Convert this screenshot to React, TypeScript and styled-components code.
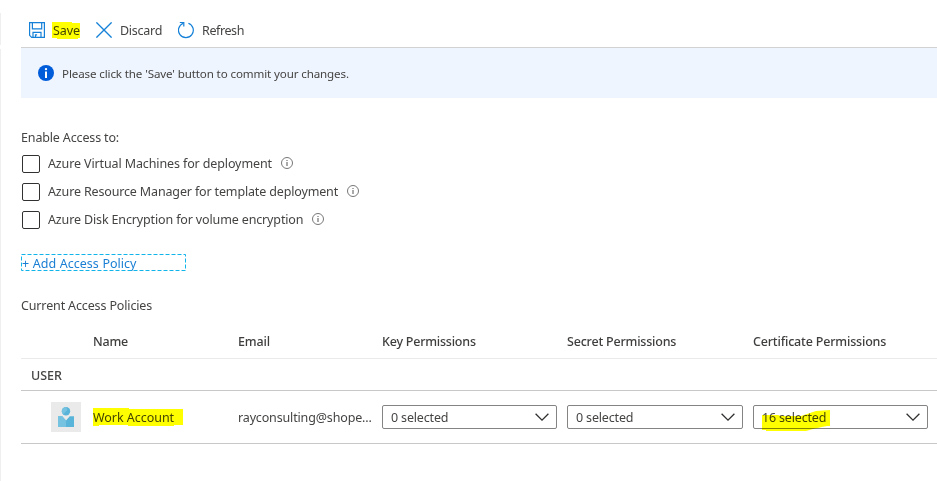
import React from 'react';
import styled, { createGlobalStyle } from 'styled-components';

const GlobalStyle = createGlobalStyle`
  * { box-sizing: border-box; }
  body {
    margin: 0;
    background: #fff;
    color: #454443;
    font: 12.5px/18px "Noto Sans", "Open Sans", sans-serif;
  }
`;

const Page = styled.main`
  width: 937px;
  height: 481px;
  padding-left: 21px;
  background: linear-gradient(#fff 13px, #efefef 13px 45px, #fff 45px 49px, #efefef 49px) 0 0 / 1px 100% no-repeat;
  overflow: hidden;
`;

const Label = styled.span<{ $track?: number }>`
  display: block;
  padding-top: 2px;
  letter-spacing: ${(p) => p.$track ?? -0.15}px;
  white-space: nowrap;
`;

const Toolbar = styled.div`
  display: flex;
  align-items: center;
  height: 48px;
  padding: 12px 0 0 8px;
  border-bottom: 1px solid #d2d2d2;
`;

const Command = styled.div<{ $width: number }>`
  display: flex;
  align-items: center;
  gap: 8px;
  width: ${(p) => p.$width}px;
  svg { flex: none; display: block; }
`;

const Marked = styled.span`
  position: relative;
  display: block;
  width: max-content;
`;

const Marker = styled.svg<{ $x: number; $y: number }>`
  position: absolute;
  left: ${(p) => p.$x}px;
  top: ${(p) => p.$y}px;
  mix-blend-mode: multiply;
  pointer-events: none;
`;

const Banner = styled.div`
  display: flex;
  align-items: center;
  gap: 8px;
  height: 50px;
  padding-left: 17px;
  background: #eff5ff;
  font-size: 11.6px;
  ${Label} { padding-top: 1px; }
`;

const Section = styled.section`
  padding-top: 30px;
`;

const Heading = styled.div`
  display: flex;
  align-items: center;
  height: 18px;
`;

const Options = styled.div`
  display: grid;
  gap: 10px;
  padding: 9px 0 0 1px;
`;

const Option = styled.label`
  display: flex;
  align-items: center;
  height: 18px;
`;

const OptionText = styled.span`
  display: flex;
  align-items: center;
  gap: 9px;
  height: 18px;
  margin: -2px 0 0 8px;
  svg { display: block; }
`;

const Checkbox = styled.span`
  width: 18px;
  height: 18px;
  border: 1px solid #323130;
  border-radius: 2px;
`;

const AddLink = styled.a`
  display: flex;
  align-items: center;
  width: 165px;
  height: 17px;
  margin: 25px 0;
  color: #1a7fd4;
  word-spacing: 0.4px;
  ${Label} { padding-left: 1px; }
  svg { position: absolute; }
`;

const Columns = styled.div`
  display: grid;
  grid-template-columns: 72px 145px 144px 185px 186px 184px;
  align-items: center;
`;

const HeaderRow = styled(Columns)`
  height: 45px;
  padding-top: 10px;
  border-bottom: 1px solid #eaeaea;
  font-weight: 540;
  color: #3f3e3d;
`;

const GroupRow = styled.div`
  display: flex;
  align-items: center;
  height: 32px;
  padding: 1px 0 0 10px;
  border-bottom: 1px solid #c8c8c8;
  font-weight: 480;
`;

const DataRow = styled(Columns)`
  height: 53px;
  border-bottom: 1px solid #c8c8c8;
`;

const Avatar = styled.div`
  width: 30px;
  height: 30px;
  margin-left: 30px;
  background: #eaeaea;
  svg { display: block; }
`;

const Dropdown = styled.div<{ $width: number }>`
  display: flex;
  align-items: center;
  justify-content: space-between;
  width: ${(p) => p.$width}px;
  height: 24px;
  padding: 0 8px;
  border: 1px solid #858483;
  border-radius: 2px;
  svg { display: block; margin-right: -1px; }
`;

const SaveIcon = () => (
  <svg width="16" height="16" fill="none" stroke="#1480d8" strokeWidth="1.2">
    <path d="M.6.6h14.8v14.8H2.7L.6 13.3z" />
    <path d="M3.4.6v6.2h9.3V.6M4 15.4v-5h8v5M6.5 15.4v-2.5h1.6" />
  </svg>
);

const DiscardIcon = () => (
  <svg width="16" height="16" fill="none" stroke="#1480d8" strokeWidth="1.35">
    <path d="M.4.4l15.2 15.2M15.6.4L.4 15.6" />
  </svg>
);

const RefreshIcon = () => (
  <svg width="16" height="18" fill="none" stroke="#1480d8" strokeWidth="1.2">
    <path d="M10.4 2.2A7.4 7.4 0 1 1 5.4 2.2" />
    <path d="M1.8 1.5h4v4" />
  </svg>
);

const BannerIcon = () => (
  <svg width="16" height="16">
    <circle cx="8" cy="8" r="8" fill="#015cda" />
    <circle cx="8" cy="4.1" r="1.2" fill="#fff" />
    <path d="M7 6.5h2v6.5H7z" fill="#fff" />
  </svg>
);

const HintIcon = () => (
  <svg width="12" height="12">
    <circle cx="6" cy="6" r="5.5" fill="none" stroke="#777" />
    <path d="M5.5 3h1v1.1h-1zM5.5 5h1v4h-1z" fill="#555" />
  </svg>
);

const Chevron = () => (
  <svg width="14" height="8" fill="none" stroke="#323130" strokeWidth="1.3">
    <path d="M.6.8L7 7.1 13.4.8" />
  </svg>
);

const PersonIcon = () => (
  <svg width="30" height="30">
    <path d="M7 14.2h4.2l3.8 4.3 3.8-4.3H23V25H7z" fill="#59b4d9" />
    <path d="M7 14.2h4.2l3.8 4.3V25H7z" fill="#76c3e1" />
    <circle cx="15" cy="9.2" r="4.2" fill="#59b4d9" />
    <path d="M15 5a4.2 4.2 0 0 0-3 7.2L16.5 8z" fill="#76c3e1" />
  </svg>
);

const options: [string, number][] = [
  ['Azure Virtual Machines for deployment', -0.12],
  ['Azure Resource Manager for template deployment', -0.15],
  ['Azure Disk Encryption for volume encryption', -0.14],
];

export default function App() {
  return (
    <>
      <GlobalStyle />
      <Page>
        <Toolbar>
          <Command $width={67}>
            <SaveIcon />
            <Marked>
              <Label $track={-0.08}>Save</Label>
              <Marker $x={-1} $y={2} width="28" height="17">
                <path d="M0 0h20v1h8v15h-2v1H5v-1H0z" fill="#ff0" />
              </Marker>
            </Marked>
          </Command>
          <Command $width={82}>
            <DiscardIcon />
            <Label $track={-0.27}>Discard</Label>
          </Command>
          <Command $width={80}>
            <RefreshIcon />
            <Label $track={-0.4}>Refresh</Label>
          </Command>
        </Toolbar>
        <Banner>
          <BannerIcon />
          <Label $track={-0.13}>Please click the 'Save' button to commit your changes.</Label>
        </Banner>
        <Section>
          <Heading><Label>Enable Access to:</Label></Heading>
          <Options>
            {options.map(([text, track]) => (
              <Option key={text}>
                <Checkbox />
                <OptionText>
                  <Label $track={track}>{text}</Label>
                  <HintIcon />
                </OptionText>
              </Option>
            ))}
          </Options>
          <AddLink>
            <svg width="165" height="17">
              <rect x=".5" y=".5" width="164" height="16" fill="none" stroke="#12b5ea" strokeDasharray="4 2" />
            </svg>
            <Label $track={0}>+ Add Access Policy</Label>
          </AddLink>
          <Heading><Label $track={-0.14}>Current Access Policies</Label></Heading>
        </Section>
        <HeaderRow>
          <span />
          <Label $track={-0.2}>Name</Label>
          <Label $track={-0.15}>Email</Label>
          <Label $track={-0.22}>Key Permissions</Label>
          <Label $track={-0.2}>Secret Permissions</Label>
          <Label $track={-0.18}>Certificate Permissions</Label>
        </HeaderRow>
        <GroupRow><Label $track={0}>USER</Label></GroupRow>
        <DataRow>
          <Avatar><PersonIcon /></Avatar>
          <Marked>
            <Label $track={-0.04}>Work Account</Label>
            <Marker $x={0} $y={1} width="90" height="18">
              <path d="M0 0h36v1h54v16h-9v1H35v-1H6v1H0z" fill="#ff0" />
            </Marker>
          </Marked>
          <Label $track={-0.15}>rayconsulting@shope...</Label>
          <Dropdown $width={175}><Label $track={-0.16}>0 selected</Label><Chevron /></Dropdown>
          <Dropdown $width={176}><Label $track={-0.16}>0 selected</Label><Chevron /></Dropdown>
          <Dropdown $width={175}>
            <Marked>
              <Label $track={-0.17}>16 selected</Label>
              <Marker $x={0} $y={3} width="68" height="22">
                <path d="M0 5h16l3 1h20l6-2 9-3 14-1v16h-3l-5 1-9 2-7 2H4v-1H0z" fill="#ff0" />
              </Marker>
            </Marked>
            <Chevron />
          </Dropdown>
        </DataRow>
      </Page>
    </>
  );
}
